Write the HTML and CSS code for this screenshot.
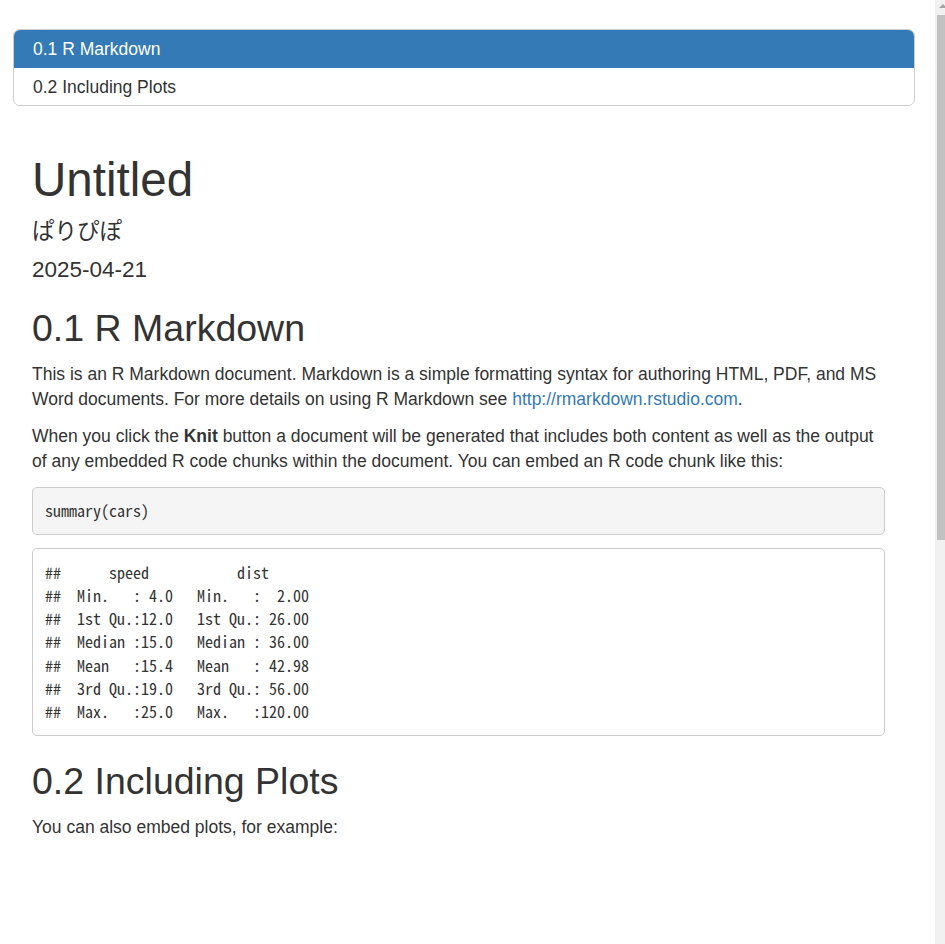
FILE: index.html
```html
<!DOCTYPE html>
<html lang="ja">
<head>
<meta charset="utf-8">
<title>Untitled</title>
<link rel="stylesheet" href="styles.css">
</head>
<body>
<div class="page">
  <nav class="toc">
    <div class="toc-item active">0.1 R Markdown</div>
    <div class="toc-item">0.2 Including Plots</div>
  </nav>
  <main class="content">
    <h1 class="title">Untitled</h1>
    <h4 class="author">ぱりぴぽ</h4>
    <h4 class="date">2025-04-21</h4>

    <h2 class="section">0.1 R Markdown</h2>
    <p>This is an R Markdown document. Markdown is a simple formatting syntax for authoring HTML, PDF, and MS Word documents. For more details on using R Markdown see <a href="#">http://rmarkdown.rstudio.com</a>.</p>
    <p>When you click the <strong>Knit</strong> button a document will be generated that includes both content as well as the output of any embedded R code chunks within the document. You can embed an R code chunk like this:</p>
    <pre class="code source">summary(cars)</pre>
    <pre class="code output">##      speed           dist       
##  Min.   : 4.0   Min.   :  2.00  
##  1st Qu.:12.0   1st Qu.: 26.00  
##  Median :15.0   Median : 36.00  
##  Mean   :15.4   Mean   : 42.98  
##  3rd Qu.:19.0   3rd Qu.: 56.00  
##  Max.   :25.0   Max.   :120.00  </pre>

    <h2 class="section">0.2 Including Plots</h2>
    <p>You can also embed plots, for example:</p>
  </main>
</div>
<div class="scrollbar" aria-hidden="true">
  <div class="scroll-arrow"></div>
  <div class="scroll-thumb"></div>
</div>
</body>
</html>
```

FILE: styles.css
```css
html, body {
  margin: 0;
  padding: 0;
  background: #ffffff;
}

body {
  font-family: "Liberation Sans", Arial, "Noto Sans CJK JP", sans-serif;
  font-size: 17.5px;
  line-height: 25px;
  color: #333333;
}

.page {
  padding: 29px 0 0 0;
}

.toc {
  margin: 0 30px 0 13px;
  border: 1px solid #cccccc;
  border-radius: 7px;
  overflow: hidden;
}

.toc-item {
  height: 37.5px;
  line-height: 38px;
  padding-left: 19px;
  font-size: 17.5px;
  color: #333333;
  background: #ffffff;
}

.toc-item.active {
  background: #337ab7;
  color: #ffffff;
}

.content {
  margin: 0 60px 0 32px;
  padding-top: 25px;
}

h1, h2, h4 {
  font-weight: 400;
  line-height: 1.1;
  color: #333333;
}

.title {
  font-size: 47.5px;
  margin: 23px 0 13.5px 0;
}

.author {
  font-size: 22.5px;
  margin: 12.5px 0;
}

.date {
  font-size: 22.5px;
  margin: 13.5px 0 12.5px 0;
}

.section {
  font-size: 37.5px;
  margin: 25px 0 12.5px 0;
}

p {
  margin: 0 0 12.5px 0;
}

a {
  color: #337ab7;
  text-decoration: none;
}

strong {
  font-weight: 700;
}

.code {
  font-family: "Noto Sans Mono CJK JP", "Liberation Mono", monospace;
  font-size: 16px;
  line-height: 23.2px;
  color: #333333;
  margin: 0 0 12.5px 0;
  padding: 11.9px;
  border: 1px solid #cccccc;
  border-radius: 5px;
  white-space: pre;
  overflow: hidden;
}

.code.source {
  background: #f5f5f5;
}

.code.output {
  background: #ffffff;
}

.scrollbar {
  position: fixed;
  top: 0;
  right: 0;
  width: 10px;
  height: 100%;
  background: #f1f1f1;
}

.scroll-arrow {
  position: absolute;
  top: 4px;
  left: 4px;
  width: 0;
  height: 0;
  border-left: 4px solid transparent;
  border-right: 4px solid transparent;
  border-bottom: 4px solid #a3a3a3;
}

.scroll-thumb {
  position: absolute;
  top: 15px;
  left: 2px;
  right: 0;
  height: 525px;
  background: #c1c1c1;
}
```
